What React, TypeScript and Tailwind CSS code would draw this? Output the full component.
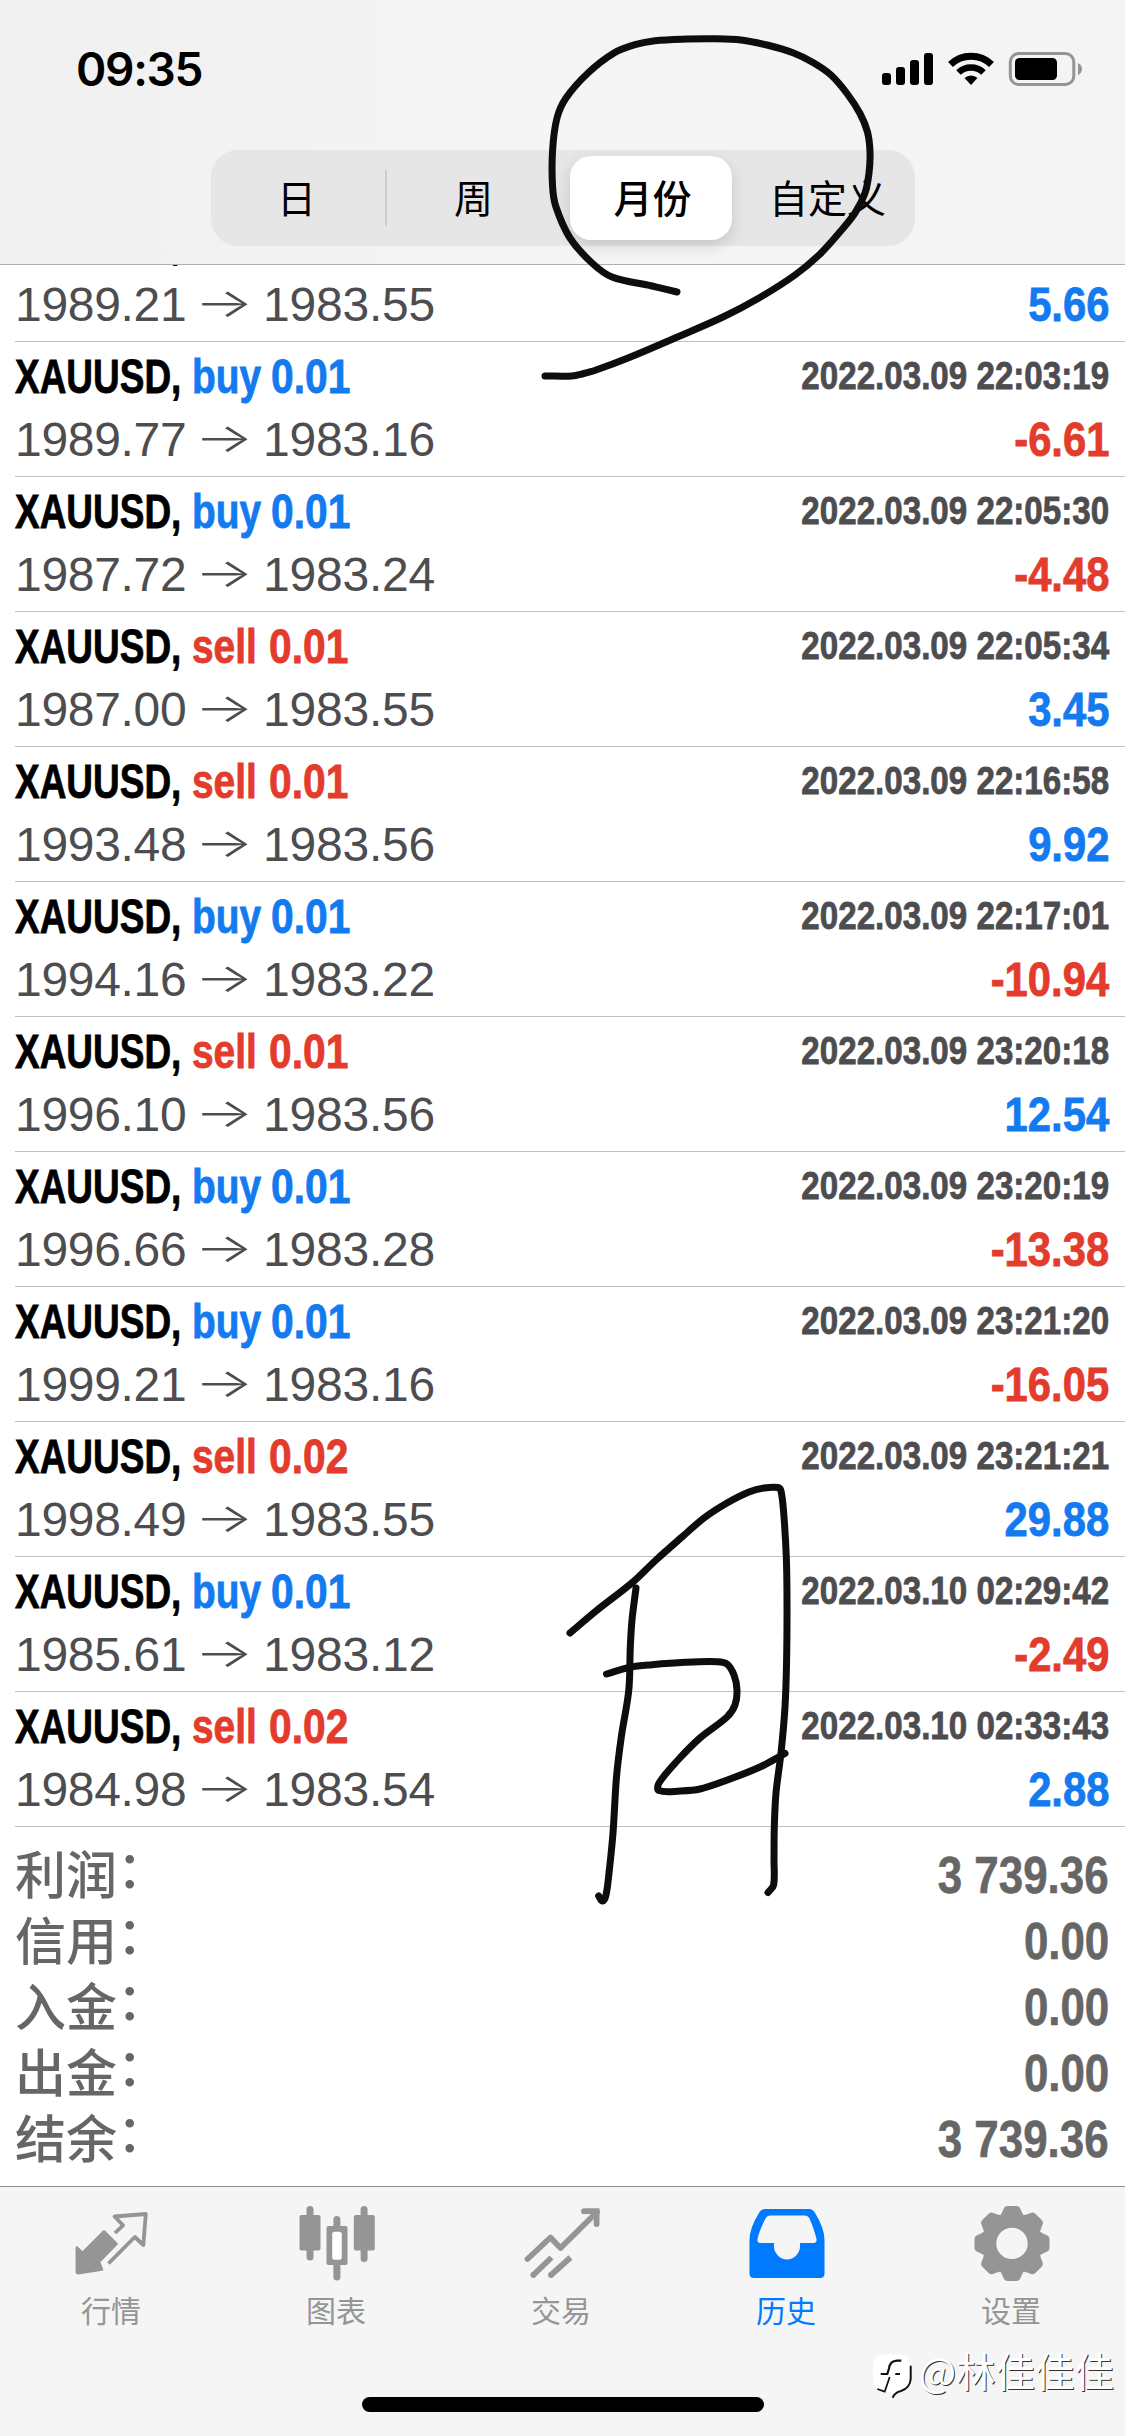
type Trade = {
  side: "buy" | "sell";
  volume: string;
  open: string;
  close: string;
  time?: string;
  profit: string;
};

const trades: Trade[] = [
  { side: "sell", volume: "0.01", open: "1989.21", close: "1983.55", profit: "5.66" },
  { side: "buy", volume: "0.01", open: "1989.77", close: "1983.16", time: "2022.03.09 22:03:19", profit: "-6.61" },
  { side: "buy", volume: "0.01", open: "1987.72", close: "1983.24", time: "2022.03.09 22:05:30", profit: "-4.48" },
  { side: "sell", volume: "0.01", open: "1987.00", close: "1983.55", time: "2022.03.09 22:05:34", profit: "3.45" },
  { side: "sell", volume: "0.01", open: "1993.48", close: "1983.56", time: "2022.03.09 22:16:58", profit: "9.92" },
  { side: "buy", volume: "0.01", open: "1994.16", close: "1983.22", time: "2022.03.09 22:17:01", profit: "-10.94" },
  { side: "sell", volume: "0.01", open: "1996.10", close: "1983.56", time: "2022.03.09 23:20:18", profit: "12.54" },
  { side: "buy", volume: "0.01", open: "1996.66", close: "1983.28", time: "2022.03.09 23:20:19", profit: "-13.38" },
  { side: "buy", volume: "0.01", open: "1999.21", close: "1983.16", time: "2022.03.09 23:21:20", profit: "-16.05" },
  { side: "sell", volume: "0.02", open: "1998.49", close: "1983.55", time: "2022.03.09 23:21:21", profit: "29.88" },
  { side: "buy", volume: "0.01", open: "1985.61", close: "1983.12", time: "2022.03.10 02:29:42", profit: "-2.49" },
  { side: "sell", volume: "0.02", open: "1984.98", close: "1983.54", time: "2022.03.10 02:33:43", profit: "2.88" },
];

const summary = [
  { label: "利润", value: "3 739.36" },
  { label: "信用", value: "0.00" },
  { label: "入金", value: "0.00" },
  { label: "出金", value: "0.00" },
  { label: "结余", value: "3 739.36" },
];

// pen strokes drawn over the screen
const strokes: number[][][] = [
  [
    [677, 292], [652, 286], [612, 277], [592, 263], [570, 238], [556, 207], [552.6, 187], [552.6, 150],
    [557, 118], [566, 98], [588, 73], [614, 53], [635, 44.7], [655, 40.7], [687, 39], [715, 38.7],
    [741, 40], [767, 45], [793, 52.7], [813, 62.5], [831, 75], [847, 93.5], [860, 113.5], [867.5, 132],
    [870, 152], [869, 173], [865, 193], [855, 213], [839, 233], [819, 255], [795, 275], [759, 298],
    [723, 317], [675, 338], [628, 358], [596, 370], [582, 374], [572, 376], [545, 376],
  ],
  [
    [570, 1633], [596, 1611], [633, 1582], [656, 1560], [682, 1537], [704, 1518], [727, 1503], [749, 1492],
    [764, 1488], [778, 1487.5], [781, 1491], [783.7, 1513], [786.3, 1557], [787, 1600], [786.6, 1660],
    [785, 1707], [781, 1753], [776, 1793], [774.3, 1827], [774, 1860], [773.6, 1885], [768, 1892.5],
  ],
  [
    [636, 1588], [632, 1620], [630.3, 1647], [628.8, 1690], [621.3, 1737], [616.5, 1777], [613, 1833],
    [609, 1873], [606, 1895], [602.7, 1901], [598.7, 1896],
  ],
  [
    [606.5, 1674], [630, 1667.3], [652, 1664.7], [685, 1662.3], [717, 1661.7], [727, 1664], [734, 1675],
    [737, 1690], [735, 1705], [727, 1717], [700, 1738], [678, 1760], [659, 1783], [659, 1790.5],
    [680, 1791], [700, 1789], [730, 1779], [760, 1767], [785, 1753.5],
  ],
];

function smooth(p: number[][]) {
  let d = `M${p[0][0]} ${p[0][1]}`;
  for (let i = 0; i < p.length - 1; i++) {
    const a = p[Math.max(i - 1, 0)];
    const b = p[i];
    const c = p[i + 1];
    const e = p[Math.min(i + 2, p.length - 1)];
    // shorter handles where neighbouring points are far apart
    const len = Math.hypot(c[0] - b[0], c[1] - b[1]);
    const k1 = len / (Math.hypot(c[0] - a[0], c[1] - a[1]) || 1) / 3;
    const k2 = len / (Math.hypot(e[0] - b[0], e[1] - b[1]) || 1) / 3;
    d += `C${b[0] + (c[0] - a[0]) * k1} ${b[1] + (c[1] - a[1]) * k1} ${c[0] - (e[0] - b[0]) * k2} ${c[1] - (e[1] - b[1]) * k2} ${c[0]} ${c[1]}`;
  }
  return d;
}

function StatusIcons() {
  return (
    <svg className="w-[202px] h-[40px]" viewBox="880 49 202 40">
      <rect x="882" y="73" width="9" height="12" rx="3" />
      <rect x="896" y="67" width="9" height="18" rx="3" />
      <rect x="910" y="60" width="9" height="25" rx="3" />
      <rect x="924" y="53" width="9" height="32" rx="3" />
      <path d="M950.5 64.5A29.5 29.5 0 0 1 991.5 64.5" fill="none" stroke="#000" strokeWidth="7" />
      <path d="M958.5 72.5A18 18 0 0 1 983.5 72.5" fill="none" stroke="#000" strokeWidth="6.5" />
      <path d="M964.5 78A9.5 9.5 0 0 1 977.5 78L971 85Z" />
      <rect x="1010.3" y="53.5" width="63.5" height="31" rx="8.5" fill="none" stroke="#949494" strokeWidth="3" />
      <rect x="1015" y="58" width="42" height="22" rx="4.5" />
      <path d="M1078 63Q1082 65 1082 69T1078 75Z" fill="#949494" />
    </svg>
  );
}

function QuotesIcon() {
  return (
    <svg className="w-[90px] h-[82px]" viewBox="0 0 90 82" fill="currentColor" stroke="currentColor">
      <path d="M8.8 47.5L14.5 53L36 31.5L48.5 44L31 62L34 69.5L10 73.2Q8.8 73.2 8.8 72Z" strokeWidth="2.5" strokeLinejoin="round" />
      <path d="M47 33L55 25.3L46.5 16.5L77.8 14L75.3 45L66.8 37L40.5 63.5" fill="none" strokeWidth="3.8" strokeLinejoin="round" />
    </svg>
  );
}

function ChartIcon() {
  return (
    <svg className="w-[90px] h-[82px]" viewBox="0 0 90 82" fill="currentColor">
      <rect x="6.5" y="15" width="21" height="35.5" rx="2" />
      <rect x="13.5" y="6" width="7" height="54.5" rx="3.5" />
      <rect x="60.8" y="15" width="21" height="35.5" rx="2" />
      <rect x="67.6" y="6" width="7" height="56" rx="3.5" />
      <rect x="40.4" y="16" width="7" height="16" rx="3.5" />
      <rect x="40.4" y="60" width="7" height="20.5" rx="3.5" />
      <rect x="33.5" y="26" width="21" height="39" rx="2" />
      <rect x="39.2" y="31.7" width="9.6" height="28" rx="2.5" fill="#fff" />
    </svg>
  );
}

function TradeIcon() {
  return (
    <svg className="w-[90px] h-[82px]" viewBox="0 0 90 82" fill="none" stroke="currentColor" strokeWidth="5.8">
      <path d="M9.5 59L32.5 37.5L42.5 48L79 12" strokeLinejoin="round" strokeLinecap="round" />
      <path d="M66 11.2H78.6V24" strokeLinecap="round" />
      <path d="M15.3 75L33.5 57.5M33 75L52.5 57.5" />
      <path d="M15.3 75h.01M33 75h.01" strokeLinecap="round" />
    </svg>
  );
}

function HistoryIcon() {
  return (
    <svg className="w-[90px] h-[82px]" viewBox="0 0 90 82" fill="currentColor">
      <path
        fillRule="evenodd"
        d="M22 9H66.5Q69.5 9 71.5 12Q81.5 28 81.5 40V73.5Q81.5 78 77 78H11Q6.5 78 6.5 73.5V40Q6.5 28 16.5 12Q18.5 9 22 9ZM27.5 15.5Q24 15.5 22.5 18.5Q16.5 30 14.5 39Q14 43 17 43H31V46A13 13.5 0 0 0 57 46V43H70.5Q74 43 73.5 39Q71.5 30 66.5 18.5Q65 15.5 61.5 15.5Z"
      />
    </svg>
  );
}

function SettingsIcon() {
  const angles = [0, 45, 90, 135, 180, 225, 270, 315];
  return (
    <svg className="w-[90px] h-[82px]" viewBox="0 0 90 82" fill="currentColor">
      <g transform="translate(44 43.4)">
        <circle r="23" fill="none" stroke="currentColor" strokeWidth="14.6" />
        {angles.map((a) => (
          <path key={a} transform={`rotate(${a})`} d="M-12.5 -26.5Q-10.5 -30 -9.5 -32L-8 -35.5Q-7 -37.5 -4.5 -37.5H4.5Q7 -37.5 8 -35.5L9.5 -32Q10.5 -30 12.5 -26.5Z" />
        ))}
      </g>
    </svg>
  );
}

const tabs = [
  { label: "行情", icon: QuotesIcon },
  { label: "图表", icon: ChartIcon },
  { label: "交易", icon: TradeIcon },
  { label: "历史", icon: HistoryIcon, active: true },
  { label: "设置", icon: SettingsIcon },
];

function TradeRow({ trade }: { trade: Trade }) {
  const sideColor = trade.side === "buy" ? "text-[#137af0]" : "text-[#e33b2c]";
  const profitColor = trade.profit.startsWith("-") ? "text-[#e33b2c]" : "text-[#137af0]";
  return (
    <div className="ml-[15px] h-[135px] shrink-0 border-b border-[#c0c0c2] pt-[3px] pr-4 text-5xl">
      <div className="flex h-[63px] justify-between font-bold [-webkit-text-stroke:0.8px]">
        <div className="flex leading-[63px]">
          <span className="w-[177px] origin-left scale-x-[.77] text-black">XAUUSD,</span>
          <span className={`flex ${sideColor}`}>
            <span className={`origin-left scale-x-[.81] ${trade.side === "buy" ? "w-[79px]" : "w-[77px]"}`}>{trade.side}</span>
            <span className="origin-left scale-x-[.85]">{trade.volume}</span>
          </span>
        </div>
        <span className="origin-right scale-x-[.85] text-[39px] leading-[61px] whitespace-nowrap text-[#4d4d50]">{trade.time}</span>
      </div>
      <div className="flex h-[63px] justify-between leading-[63px]">
        <div className="flex text-[#4d4d50]">
          <span className="w-[185px] tracking-[-0.3px]">{trade.open}</span>
          <span className="w-[48px] scale-x-[1.55] text-center font-['Inter'] text-[40px] leading-[59px] font-light">→</span>
          <span className="ml-[15px] tracking-[-0.2px]">{trade.close}</span>
        </div>
        <span className={`origin-right scale-x-[.87] font-bold [-webkit-text-stroke:0.8px] ${profitColor}`}>{trade.profit}</span>
      </div>
    </div>
  );
}

export default function App() {
  return (
    <div className="relative flex h-[2436px] w-[1125px] flex-col overflow-hidden bg-white font-['Liberation_Sans','Noto_Sans_CJK_SC',sans-serif]">
      <header className="z-10 h-[265px] shrink-0 border-b border-[#b0b0b2] bg-linear-to-r from-[#f0f0f0] via-[#f6f5f5] to-[#f4f4f5]">
        <div className="flex h-[150px] items-start justify-between pt-[49px] pr-[43px] pl-[76px]">
          <span className="font-['Inter'] text-[46px] leading-[40px] font-semibold tracking-[-1.3px] text-black">09:35</span>
          <StatusIcons />
        </div>
        <div className="mx-auto flex h-24 w-[704px] items-center rounded-[27px] bg-[#e6e6e7] font-['Noto_Sans_CJK_SC',sans-serif] text-[39px] leading-[80px] text-black">
          <span className="w-[174px] pr-[2px] pb-1 text-center">日</span>
          <span className="h-[56px] w-[2px] bg-[#cdcdcf]"></span>
          <span className="w-[176px] pr-[2px] pb-1 text-center">周</span>
          <span className="mr-[6px] ml-[7px] h-[84px] w-[162px] rounded-[21px] bg-white pl-[4px] text-center font-medium shadow-[0_6px_16px_rgba(0,0,0,0.14)]">月份</span>
          <span className="w-[177px] pb-1 pl-[3px] text-center">自定义</span>
        </div>
      </header>

      <main className="flex h-[1921px] shrink-0 flex-col overflow-hidden">
        <div className="-mt-[58px]">
          {trades.map((trade, i) => (
            <TradeRow key={i} trade={trade} />
          ))}
        </div>
        <div className="pt-[15px] pr-4 pl-[15px] text-[#666]">
          {summary.map((item) => (
            <div key={item.label} className="flex h-[66px] justify-between text-[51px]">
              <span className="flex font-['Noto_Sans_CJK_SC',sans-serif] leading-[60px] font-medium">
                {item.label}
                <span className="leading-[49px]">：</span>
              </span>
              <span className="origin-right scale-x-[.86] leading-[67px] font-bold [-webkit-text-stroke:0.6px]">{item.value}</span>
            </div>
          ))}
        </div>
      </main>

      <footer className="flex h-[250px] shrink-0 flex-col items-center border-t border-[#8f8f91] bg-[#f5f5f5]">
        <nav className="grid h-[210px] w-full grid-cols-5 pt-[13px]">
          {tabs.map(({ label, icon: Icon, active }) => (
            <div key={label} className={`flex flex-col items-center ${active ? "text-[#007aff]" : "text-[#959595]"}`}>
              <Icon />
              <span className="mt-[5px] pr-[3px] font-['Noto_Sans_CJK_SC',sans-serif] text-[30px] leading-[44px]">{label}</span>
            </div>
          ))}
        </nav>
        <div className="h-[15px] w-[402px] rounded-full bg-black"></div>
      </footer>

      {/* watermark */}
      <div className="absolute right-[11px] bottom-[36px] z-20 flex items-start gap-[6px]">
        <svg className="h-[46px] w-[40px]" viewBox="0 0 40 46">
          <path d="M12 0H26Q37 1 37 12V25Q37 36 26 37.5Q22 39 20 43L17 38Q9 38 4 35Q0 31 0 25V12Q0 1 12 0Z" fill="#fff" />
          <path d="M37.7 12.5V25Q37 34 28 37Q22 38.5 20 43" fill="none" stroke="#111" strokeWidth="2" strokeLinecap="round" />
          <path d="M28.3 6.7H24Q17 7 16 14.5L14.3 20H7.7M22.3 20H27" fill="none" stroke="#111" strokeWidth="2.2" />
          <path d="M16.7 23L11.7 37.7L4.3 35" fill="none" stroke="#111" strokeWidth="1.8" />
        </svg>
        <span className="mt-[-7px] font-['Noto_Sans_CJK_SC',sans-serif] text-[39.5px] leading-[46px] font-normal text-white [text-shadow:1px_1px_0_#333]">@林佳佳佳</span>
      </div>

      <svg className="pointer-events-none absolute inset-0 z-30 h-[2436px] w-[1125px]" viewBox="0 0 1125 2436" fill="none" stroke="#0d0d0d" strokeWidth="7" strokeLinecap="round" strokeLinejoin="round">
        {strokes.map((points, i) => (
          <path key={i} d={smooth(points)} />
        ))}
      </svg>
    </div>
  );
}
